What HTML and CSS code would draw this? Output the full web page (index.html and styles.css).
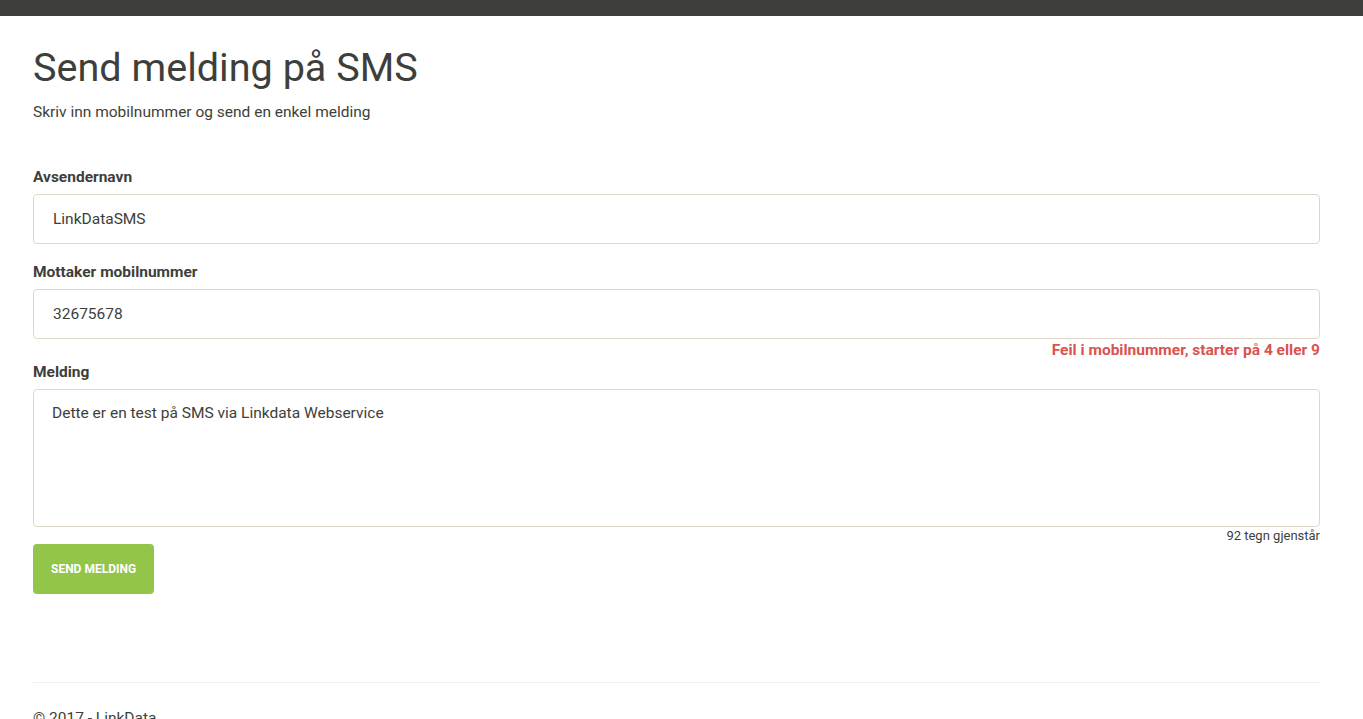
FILE: index.html
```html
<!DOCTYPE html>
<html lang="no">
<head>
  <meta charset="UTF-8">
  <title>Send melding på SMS</title>
  <link rel="stylesheet" href="styles.css">
</head>
<body>

  <div class="topbar"></div>

  <div class="container">
    <h1>Send melding på SMS</h1>
    <p class="lead">Skriv inn mobilnummer og send en enkel melding</p>

    <form class="sms-form">
      <div class="form-group">
        <label for="avsender">Avsendernavn</label>
        <input id="avsender" class="form-control" value="LinkDataSMS">
        <div class="note"></div>
      </div>

      <div class="form-group">
        <label for="mottaker">Mottaker mobilnummer</label>
        <input id="mottaker" class="form-control" value="32675678">
        <div class="note error">Feil i mobilnummer, starter på 4 eller 9</div>
      </div>

      <div class="form-group">
        <label for="melding">Melding</label>
        <textarea id="melding" class="form-control">Dette er en test på SMS via Linkdata Webservice</textarea>
        <div class="note count">92 tegn gjenstår</div>
      </div>

      <button type="button" class="btn-success">Send melding</button>
    </form>

    <footer>
      <hr>
      <p>&copy; 2017 - LinkData</p>
    </footer>
  </div>

</body>
</html>
```

FILE: styles.css
```css
body {
  margin: 0;
  font-family: Roboto, "Liberation Sans", sans-serif;
  font-size: 15.5px;
  color: #3e3f3a;
  background: #fff;
}
.topbar {
  height: 16px;
  background: #3e3f3a;
}
.container {
  padding: 0 43px 0 33px;
}
h1 {
  margin: 29px 0 0;
  font-size: 39.6px;
  font-weight: 400;
  line-height: 46px;
}
.lead {
  margin: 11px 0 0;
  line-height: 20px;
}
.sms-form {
  margin-top: 45px;
}
.form-group label {
  display: block;
  font-weight: 700;
  line-height: 20px;
  margin-bottom: 7px;
}
.form-control {
  display: block;
  box-sizing: border-box;
  width: 100%;
  height: 50px;
  padding: 0 19px;
  font-family: inherit;
  font-size: 15.5px;
  color: #3e3f3a;
  border: 1px solid #dfd7ca;
  border-radius: 4px;
  background: #fff;
}
textarea.form-control {
  height: 138px;
  padding: 13px 18px;
  line-height: 20px;
  resize: none;
}
.note {
  min-height: 18px;
  text-align: right;
  font-size: 13px;
  line-height: 18px;
}
.note.count {
  min-height: 0;
  line-height: 17px;
}
.note.error {
  color: #d9534f;
  font-size: 15.5px;
  font-weight: 700;
  line-height: 23px;
}
.btn-success {
  height: 50px;
  padding: 0 18px;
  background: #93c54b;
  color: #fff;
  border: none;
  border-radius: 4px;
  font-family: inherit;
  font-size: 12px;
  font-weight: 700;
  text-transform: uppercase;
  cursor: pointer;
}
footer hr {
  margin: 88px 0 0;
  border: none;
  border-top: 1px solid #f2eee8;
}
footer p {
  margin: 25px 0 0;
  line-height: 20px;
}
```
